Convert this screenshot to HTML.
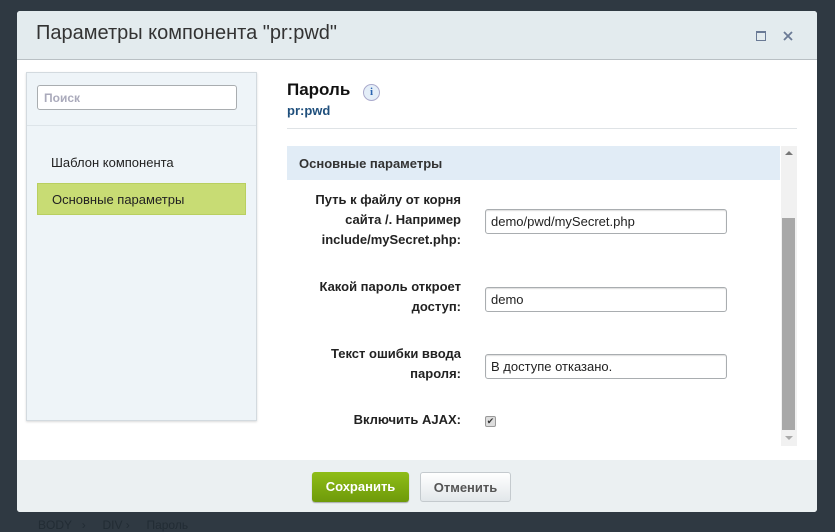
<!DOCTYPE html>
<html><head><meta charset="utf-8"><style>
*{box-sizing:border-box;margin:0;padding:0}
body{width:835px;height:532px;background:#2f3942;position:relative;overflow:hidden;font-family:"Liberation Sans",Arial,sans-serif}
.dlg{position:absolute;left:17px;top:11px;width:800px;height:501px;background:#fff;border-radius:3px;overflow:hidden}
.hd{height:49px;background:#e3ebee;border-bottom:1px solid #b9c0c4;position:relative}
.hd h1{position:absolute;left:19px;top:11px;font-weight:normal;font-size:20px;color:#333}
.left{position:absolute;left:9px;top:61px;width:231px;height:349px;background:#eef4f8;border:1px solid #d3dadf;box-shadow:0 1px 2px rgba(0,0,0,.15)}
.search{position:absolute;left:10px;top:12px;width:200px;height:25px;border:1px solid #a9adb0;border-radius:3px;background:#fff;font-size:12px;font-weight:bold;color:#aab;padding:5px 6px}
.sep{position:absolute;left:0;right:0;top:52px;border-top:1px solid #dde4e9}
.it{position:absolute;left:10px;width:209px;height:32px;font-size:13px;color:#222;padding:8px 14px}
.ft{position:absolute;left:0;right:0;top:449px;height:52px;background:#ebf0f2}
.btn{position:absolute;top:12px;height:30px;border-radius:3px;font-size:13px;font-weight:bold;text-align:center;line-height:29px}
.lbl{position:absolute;right:356px;text-align:right;font-size:13px;font-weight:bold;color:#222;line-height:20px}
.inp{position:absolute;left:468px;width:242px;height:25px;border:1px solid #a9adb0;border-radius:3px;font-size:13px;color:#222;padding:4px 5px;box-shadow:inset 0 1px 1px #ddd}
</style></head><body>
<div class="dlg">
<div class="hd"><h1>Параметры компонента "pr:pwd"</h1>
<div style="position:absolute;left:739px;top:20px;width:10px;height:10px;border:1px solid #6a7a95;border-top-width:2px"></div>
<svg style="position:absolute;left:766px;top:20px" width="10" height="10"><path d="M1 1L9 9M9 1L1 9" stroke="#6a7a95" stroke-width="1.8"/></svg></div>
<div class="left"><div class="search">Поиск</div><div class="sep"></div>
<div class="it" style="top:74px">Шаблон компонента</div>
<div class="it" style="top:110px;background:#c8dc74;border:1px solid #b9cf60">Основные параметры</div></div>
<div style="position:absolute;left:270px;top:69px;font-size:17px;font-weight:bold;color:#111">Пароль</div>
<div style="position:absolute;left:346px;top:73px;width:17px;height:17px;border-radius:50%;background:#e4eef8;border:1px solid #aac;color:#2a64b0;font-size:11px;font-weight:bold;text-align:center;line-height:15px;font-family:'Liberation Serif',serif">i</div>
<div style="position:absolute;left:270px;top:92px;font-size:13px;font-weight:bold;color:#1f4f7c">pr:pwd</div>
<div style="position:absolute;left:270px;top:117px;width:510px;border-top:1px solid #dfe3e6"></div>
<div style="position:absolute;left:270px;top:135px;width:493px;height:34px;background:#e1ecf6;font-size:13px;font-weight:bold;color:#333;padding:10px 12px">Основные параметры</div>
<div style="position:absolute;left:764px;top:135px;width:16px;height:300px;background:#f1f1f1"><div style="position:absolute;left:1px;top:72px;width:13px;height:212px;background:#a8a8a8"></div>
<div style="position:absolute;left:4px;top:5px;border:4px solid transparent;border-bottom-color:#777;border-top:0"></div>
<div style="position:absolute;left:4px;top:290px;border:4px solid transparent;border-top-color:#aaa;border-bottom:0"></div></div>
<div class="lbl" style="top:179px;right:356px">Путь к файлу от корня<br>сайта /. Например<br>include/mySecret.php:</div>
<div class="inp" style="top:198px">demo/pwd/mySecret.php</div>
<div class="lbl" style="top:266px">Какой пароль откроет<br>доступ:</div>
<div class="inp" style="top:276px">demo</div>
<div class="lbl" style="top:333px">Текст ошибки ввода<br>пароля:</div>
<div class="inp" style="top:343px">В доступе отказано.</div>
<div class="lbl" style="top:399px">Включить AJAX:</div>
<div style="position:absolute;left:468px;top:405px;width:11px;height:11px;border:1px solid #999;border-radius:2px;background:#ddd;font-size:9px;line-height:9px;text-align:center;color:#333">✔</div>
<div class="ft">
<div class="btn" style="left:295px;width:97px;background:linear-gradient(#8fbd17,#6e9a0a);color:#fff;box-shadow:0 1px 1px rgba(0,0,0,.3)">Сохранить</div>
<div class="btn" style="left:403px;width:91px;background:linear-gradient(#fff,#e2e7ea);border:1px solid #c4cace;color:#555">Отменить</div></div>
</div>
<div style="position:absolute;left:38px;top:518px;font-size:12px;color:#222c34">BODY &nbsp; › &nbsp;&nbsp;&nbsp; DIV › &nbsp;&nbsp;&nbsp; Пароль</div>
</body></html>
